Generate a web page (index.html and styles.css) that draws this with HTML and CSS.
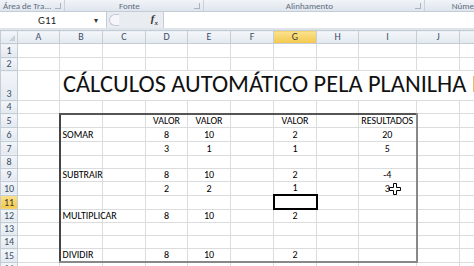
FILE: index.html
```html
<!DOCTYPE html>
<html lang="pt-br">

<head>
    <meta charset="UTF-8">
    <title>Planilha - Cálculos</title>
    <link rel="stylesheet" href="styles.css">
</head>

<body>
    <div class="ribbon-groups">
        <div class="group g-clip"><span class="label">Área de Tra...</span><span class="launcher"></span></div>
        <div class="group g-font"><span class="label">Fonte</span><span class="launcher"></span></div>
        <div class="group g-align"><span class="label">Alinhamento</span><span class="launcher"></span></div>
        <div class="group g-num"><span class="label">Núme</span></div>
    </div>

    <div class="formula-bar">
        <div class="name-box"><span class="ref">G11</span><span class="drop">▾</span></div>
        <div class="fx-area"><span class="knob"></span><i class="fx">f<sub>x</sub></i></div>
        <div class="formula-input"></div>
    </div>

    <table class="sheet">
        <colgroup>
            <col class="w-head"><col class="w-a"><col class="w-b"><col class="w-c"><col class="w-d"><col class="w-e">
            <col class="w-f"><col class="w-g"><col class="w-h"><col class="w-i"><col class="w-j"><col class="w-k">
        </colgroup>
        <tr class="col-heads">
            <th class="corner"></th><th>A</th><th>B</th><th>C</th><th>D</th><th>E</th><th>F</th><th class="active">G</th><th>H</th><th>I</th><th>J</th><th>K</th>
        </tr>
        <tr class="r14"><th>1</th><td></td><td></td><td></td><td></td><td></td><td></td><td></td><td></td><td></td><td></td><td></td></tr>
        <tr class="r13"><th>2</th><td></td><td></td><td></td><td></td><td></td><td></td><td></td><td></td><td></td><td></td><td></td></tr>
        <tr class="r30"><th>3</th><td></td><td colspan="10" class="title"><span class="title-text">CÁLCULOS AUTOMÁTICO PELA PLANILHA EXCEL</span></td></tr>
        <tr class="r13"><th>4</th><td></td><td></td><td></td><td></td><td></td><td></td><td></td><td></td><td></td><td></td><td></td></tr>
        <tr class="r13"><th>5</th><td></td><td class="bl bt"></td><td class="bt"></td><td class="bt c">VALOR</td><td class="bt c">VALOR</td><td class="bt"></td><td class="bt c">VALOR</td><td class="bt"></td><td class="bt br c">RESULTADOS</td><td></td><td></td></tr>
        <tr class="r14"><th>6</th><td></td><td class="bl l">SOMAR</td><td></td><td class="c">8</td><td class="c">10</td><td></td><td class="c">2</td><td></td><td class="br c">20</td><td></td><td></td></tr>
        <tr class="r14"><th>7</th><td></td><td class="bl"></td><td></td><td class="c">3</td><td class="c">1</td><td></td><td class="c">1</td><td></td><td class="br c">5</td><td></td><td></td></tr>
        <tr class="r13"><th>8</th><td></td><td class="bl"></td><td></td><td></td><td></td><td></td><td></td><td></td><td class="br"></td><td></td><td></td></tr>
        <tr class="r13"><th>9</th><td></td><td class="bl l">SUBTRAIR</td><td></td><td class="c">8</td><td class="c">10</td><td></td><td class="c">2</td><td></td><td class="br c">-4</td><td></td><td></td></tr>
        <tr class="r14"><th>10</th><td></td><td class="bl"></td><td></td><td class="c">2</td><td class="c">2</td><td></td><td class="c">1</td><td></td><td class="br c cursor-cell">3<svg class="cursor" width="12" height="12" viewBox="0 0 12 12"><path d="M4.5 .5h3v4h4v3h-4v4h-3v-4h-4v-3h4z" fill="#fff" stroke="#000" stroke-width="1"/></svg></td><td></td><td></td></tr>
        <tr class="r14"><th class="active">11</th><td></td><td class="bl"></td><td></td><td></td><td></td><td></td><td class="selected"><span class="handle"></span></td><td></td><td class="br"></td><td></td><td></td></tr>
        <tr class="r13"><th>12</th><td></td><td class="bl l">MULTIPLICAR</td><td></td><td class="c">8</td><td class="c">10</td><td></td><td class="c">2</td><td></td><td class="br"></td><td></td><td></td></tr>
        <tr class="r13"><th>13</th><td></td><td class="bl"></td><td></td><td></td><td></td><td></td><td></td><td></td><td class="br"></td><td></td><td></td></tr>
        <tr class="r13"><th>14</th><td></td><td class="bl"></td><td></td><td></td><td></td><td></td><td></td><td></td><td class="br"></td><td></td><td></td></tr>
        <tr class="r13"><th>15</th><td></td><td class="bl bb l">DIVIDIR</td><td class="bb"></td><td class="bb c">8</td><td class="bb c">10</td><td class="bb"></td><td class="bb c">2</td><td class="bb"></td><td class="bb br"></td><td></td><td></td></tr>
        <tr class="r13"><th>16</th><td></td><td></td><td></td><td></td><td></td><td></td><td></td><td></td><td></td><td></td><td></td></tr>
    </table>
</body>

</html>
```

FILE: styles.css
```css
* {
    box-sizing: border-box;
}

body {
    margin: 0;
    width: 474px;
    height: 266px;
    overflow: hidden;
    background: #fff;
    font-family: Carlito, "Liberation Sans", sans-serif;
}

/* faixa com os nomes dos grupos da faixa de opções */
.ribbon-groups {
    display: flex;
    height: 12px;
    background: linear-gradient(#f1f4f8, #dfe5ed);
    border-bottom: 1px solid #c3ccd7;
    font-size: 9px;
    line-height: 11px;
    color: #5e6b7d;
}

.group {
    display: flex;
    align-items: center;
    border-right: 1px solid #c9d1db;
}

.group .label {
    flex: 1;
    text-align: center;
    white-space: nowrap;
}

.g-clip {
    width: 65px;
}

.g-clip .label {
    text-align: left;
    padding-left: 3px;
}

.g-font {
    width: 140px;
}

.g-align {
    width: 222px;
}

.g-num {
    flex: 1;
    border-right: none;
}

.g-num .label {
    text-align: left;
    padding-left: 27px;
}

.launcher {
    width: 6px;
    height: 6px;
    margin-right: 3px;
    border: 1px solid #a9b3bf;
    border-width: 0 1px 1px 0;
}

/* barra de fórmulas */
.formula-bar {
    display: flex;
    height: 18px;
    background: #fff;
    border-bottom: 2px solid #dfe4ea;
}

.name-box {
    width: 107px;
    display: flex;
    align-items: center;
    font-size: 11px;
    color: #222;
    border-right: 1px solid #c5ccd5;
}

.name-box .ref {
    flex: 1;
    text-align: center;
}

.name-box .drop {
    width: 12px;
    font-size: 8px;
    color: #333;
}

.fx-area {
    width: 56px;
    display: flex;
    align-items: center;
    background: #e9edf2;
}

.knob {
    width: 10px;
    height: 12px;
    margin-left: 2px;
    border: 1px solid #c2cad4;
    border-right: none;
    border-radius: 6px 0 0 6px;
    background: #f4f6f9;
}

.fx {
    margin-left: auto;
    margin-right: 5px;
    font-family: "Liberation Serif", serif;
    font-size: 11px;
    font-weight: bold;
    color: #333;
}

.fx sub {
    font-size: 7px;
}

.formula-input {
    flex: 1;
    border-left: 1px solid #c5ccd5;
    background: #fff;
}

/* planilha */
.sheet {
    border-collapse: collapse;
    table-layout: fixed;
    width: 502px;
    font-size: 10px;
    color: #000;
}

.w-head { width: 17px; }
.w-a { width: 42px; }
.w-b { width: 43px; }
.w-c { width: 43px; }
.w-d { width: 42px; }
.w-e { width: 43px; }
.w-f { width: 43px; }
.w-g { width: 43px; }
.w-h { width: 42px; }
.w-i { width: 58px; }
.w-j { width: 43px; }
.w-k { width: 43px; }

.sheet th,
.sheet td {
    padding: 0 2px;
    border: 1px solid #dadcdd;
    overflow: hidden;
    white-space: nowrap;
    vertical-align: bottom;
    line-height: 12px;
}

.sheet th {
    background: linear-gradient(#f3f6fa, #e3e9f0);
    border-color: #c4ccd6;
    color: #3d4f66;
    font-weight: normal;
    font-size: 10px;
    text-align: center;
    padding: 0;
}

.sheet th.active {
    background: linear-gradient(#fbe28e, #f3c84c);
    color: #3d3a30;
}

.col-heads th {
    height: 13px;
}

.corner {
    position: relative;
}

.corner::after {
    content: "";
    position: absolute;
    right: 2px;
    bottom: 2px;
    border-left: 6px solid transparent;
    border-bottom: 6px solid #c9d0d8;
}

.r13 td, .r13 th { height: 13px; }
.r14 td, .r14 th { height: 14px; }
.r30 td, .r30 th { height: 30px; }

.sheet td.title {
    overflow: visible;
    padding: 0 0 0 3px;
    line-height: 22px;
}

.title-text {
    font-size: 24.4px;
    color: #111;
}

.sheet td.l {
    overflow: visible;
}

.c {
    text-align: center;
}

.bl { border-left: 2px solid #444 !important; }
.bt { border-top: 2px solid #555 !important; }
.br { border-right: 2px solid #888 !important; }
.bb { border-bottom: 2px solid #888 !important; }

.selected {
    position: relative;
    border: 2px solid #000 !important;
}

.handle {
    position: absolute;
    right: -4px;
    bottom: -4px;
    width: 5px;
    height: 5px;
    background: #000;
    border: 1px solid #fff;
}

.cursor-cell {
    position: relative;
}

.cursor {
    position: absolute;
    left: 30px;
    top: 1px;
}
```
